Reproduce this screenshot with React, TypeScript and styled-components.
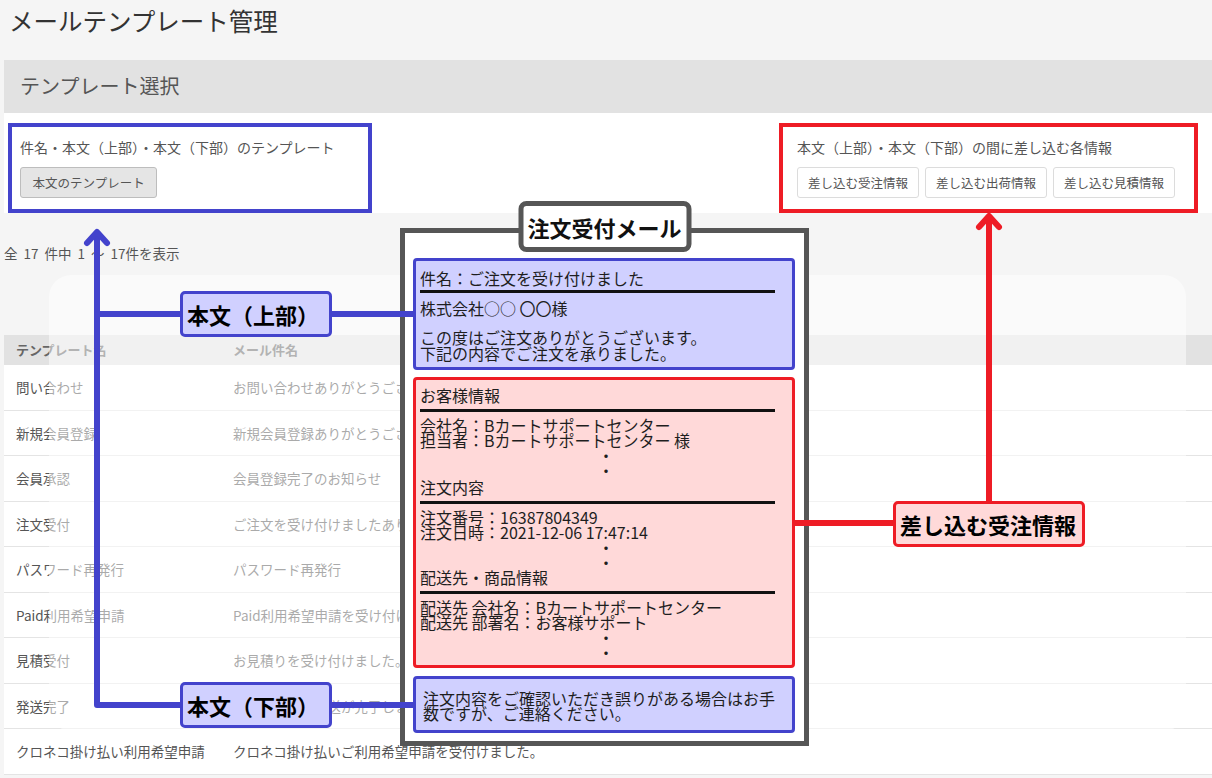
import React from 'react';
import styled, { createGlobalStyle, css } from 'styled-components';

const BLUE = '#4343cc';
const RED = '#ee1c25';
const LAVENDER = '#d0d0ff';
const PINK = '#ffd9d9';
const FRAME = '#565656';

const GlobalStyle = createGlobalStyle`
  html, body {
    margin: 0;
    padding: 0;
    overflow: hidden;
  }
  body {
    background: #f5f5f5;
    color: #555;
    font-family: "Noto Sans CJK JP", "Noto Sans", sans-serif;
  }
`;

type Tone = 'blue' | 'red';

const rows = [
  { name: '問い合わせ', subject: 'お問い合わせありがとうございます' },
  { name: '新規会員登録', subject: '新規会員登録ありがとうございます' },
  { name: '会員承認', subject: '会員登録完了のお知らせ' },
  { name: '注文受付', subject: 'ご注文を受け付けましたありがとうございました' },
  { name: 'パスワード再発行', subject: 'パスワード再発行' },
  { name: 'Paid利用希望申請', subject: 'Paid利用希望申請を受け付けました' },
  { name: '見積受付', subject: 'お見積りを受け付けました。ありがとうございます' },
  { name: '発送完了', subject: 'ご注文商品の発送が完了しました' },
  { name: 'クロネコ掛け払い利用希望申請', subject: 'クロネコ掛け払いご利用希望申請を受付けました。' },
];

export default function App() {
  return (
    <>
      <GlobalStyle />
      <Page>
        <PageTitle>メールテンプレート管理</PageTitle>
        <SectionBar>テンプレート選択</SectionBar>
        <SelectPanel>
          <Group>
            <GroupLabel>件名・本文（上部）・本文（下部）のテンプレート</GroupLabel>
            <ButtonRow>
              <Btn $gray>本文のテンプレート</Btn>
            </ButtonRow>
          </Group>
          <Group>
            <GroupLabel>本文（上部）・本文（下部）の間に差し込む各情報</GroupLabel>
            <ButtonRow>
              <Btn>差し込む受注情報</Btn>
              <Btn>差し込む出荷情報</Btn>
              <Btn>差し込む見積情報</Btn>
            </ButtonRow>
          </Group>
        </SelectPanel>

        <Count>全 17 件中 1 ～ 17件を表示</Count>

        <Table>
          <HeadRow>
            <HeadCell>テンプレート名</HeadCell>
            <HeadCell>メール件名</HeadCell>
          </HeadRow>
          {rows.map((r) => (
            <Row key={r.name}>
              <Cell>{r.name}</Cell>
              <Cell>{r.subject}</Cell>
            </Row>
          ))}
        </Table>

        <Fade />

        {/* annotation layer */}
        <Outline $tone="blue" $x={8} $y={123} $w={364} $h={90} />
        <Outline $tone="red" $x={779} $y={123} $w={419} $h={90} />

        <MailPanel>
          <PanelTab>注文受付メール</PanelTab>
          <SubjectBlock>
            <Line>件名：ご注文を受け付けました</Line>
            <Rule $tight />
            <Line>株式会社○○ 〇〇様</Line>
            <Line $gap={13}>この度はご注文ありがとうございます。</Line>
            <Line>下記の内容でご注文を承りました。</Line>
          </SubjectBlock>
          <InsertBlock>
            <Line>お客様情報</Line>
            <Rule />
            <Line>会社名：Bカートサポートセンター</Line>
            <Line>担当者：Bカートサポートセンター 様</Line>
            <Dot>・</Dot>
            <Dot>・</Dot>
            <Line $gap={2}>注文内容</Line>
            <Rule />
            <Line>注文番号：16387804349</Line>
            <Line>注文日時：2021-12-06 17:47:14</Line>
            <Dot>・</Dot>
            <Dot>・</Dot>
            <Line>配送先・商品情報</Line>
            <Rule />
            <Line>配送先 会社名：Bカートサポートセンター</Line>
            <Line>配送先 部署名：お客様サポート</Line>
            <Dot>・</Dot>
            <Dot>・</Dot>
          </InsertBlock>
          <FooterBlock>
            <Line>注文内容をご確認いただき誤りがある場合はお手</Line>
            <Line>数ですが、ご連絡ください。</Line>
          </FooterBlock>
        </MailPanel>

        <Connectors viewBox="0 0 1212 778" width={1212} height={778}>
          <g fill="none" stroke={BLUE} strokeWidth={6} strokeLinejoin="round">
            <path d="M97 236 V705 H180" />
            <path d="M97 314 H180" />
            <path d="M332 314 H413" />
            <path d="M332 705 H413" />
            <path d="M87 243 L97 232 L107 243" strokeLinecap="round" />
          </g>
          <g fill="none" stroke={RED} strokeWidth={6} strokeLinejoin="round">
            <path d="M989 220 V501" />
            <path d="M795 523 H893" />
            <path d="M979 227 L989 216 L999 227" strokeLinecap="round" />
          </g>
        </Connectors>

        <Callout $tone="blue" $x={180} $y={291} $w={152}>本文（上部）</Callout>
        <Callout $tone="blue" $x={180} $y={682} $w={152}>本文（下部）</Callout>
        <Callout $tone="red" $x={893} $y={501} $w={192}>差し込む受注情報</Callout>
      </Page>
    </>
  );
}

const Page = styled.div`
  position: relative;
  width: 1212px;
  height: 778px;
  overflow: hidden;
  padding-left: 4px;
  box-sizing: border-box;
`;

const PageTitle = styled.h1`
  margin: 0 0 0 5px;
  height: 60px;
  padding-top: 6px;
  box-sizing: border-box;
  font-size: 24.5px;
  line-height: 30px;
  font-weight: 400;
  color: #333;
`;

const SectionBar = styled.div`
  display: flex;
  align-items: center;
  height: 53px;
  padding: 0 16px 3px;
  box-sizing: border-box;
  background: #e2e2e2;
  font-size: 20px;
  color: #555;
`;

const SelectPanel = styled.div`
  display: flex;
  justify-content: space-between;
  height: 100px;
  padding: 24px 37px 0 16px;
  box-sizing: border-box;
  background: #fff;
`;

const Group = styled.div`
  display: flex;
  flex-direction: column;
  gap: 10px;
`;

const GroupLabel = styled.div`
  font-size: 14px;
  line-height: 20px;
  color: #555;
  white-space: nowrap;
`;

const ButtonRow = styled.div`
  display: flex;
  gap: 6px;
`;

const Btn = styled.button<{ $gray?: boolean }>`
  height: 31px;
  padding: 0 10px;
  border-radius: 3px;
  border: 1px solid #dcdcdc;
  background: #fff;
  color: #555;
  font-family: inherit;
  font-size: 12.5px;
  white-space: nowrap;
  ${(p) =>
    p.$gray &&
    css`
      padding: 0 11.5px;
      background: #e5e5e5;
      border-color: #bdbdbd;
    `}
`;

const Count = styled.div`
  margin-top: 30px;
  font-size: 13.5px;
  line-height: 20px;
  word-spacing: 3px;
  color: #555;
`;

const Table = styled.div`
  margin-top: 72px;
`;

const HeadRow = styled.div`
  display: grid;
  grid-template-columns: 217px 1fr;
  height: 30px;
  background: #e2e2e2;
`;

const HeadCell = styled.div`
  padding-left: 12px;
  font-size: 13px;
  line-height: 30px;
  font-weight: 700;
  color: #666;
`;

const Row = styled.div`
  display: grid;
  grid-template-columns: 217px 1fr;
  height: 45.5px;
  box-sizing: border-box;
  border-bottom: 1px solid #e4e4e4;
  background: #fff;
`;

const Cell = styled.div`
  display: flex;
  align-items: center;
  padding-left: 12px;
  font-size: 13.5px;
  color: #555;
  white-space: nowrap;
  overflow: hidden;
`;

const Fade = styled.div`
  position: absolute;
  left: 49px;
  top: 275px;
  width: 1137px;
  height: 456px;
  border-radius: 22px;
  background: rgba(255, 255, 255, 0.5);
`;

const Outline = styled.div<{ $tone: Tone; $x: number; $y: number; $w: number; $h: number }>`
  position: absolute;
  left: ${(p) => p.$x}px;
  top: ${(p) => p.$y}px;
  width: ${(p) => p.$w}px;
  height: ${(p) => p.$h}px;
  box-sizing: border-box;
  border: 4px solid ${(p) => (p.$tone === 'blue' ? BLUE : RED)};
`;

const Connectors = styled.svg`
  position: absolute;
  left: 0;
  top: 0;
  pointer-events: none;
`;

const Callout = styled.div<{ $tone: Tone; $x: number; $y: number; $w: number }>`
  position: absolute;
  left: ${(p) => p.$x}px;
  top: ${(p) => p.$y}px;
  width: ${(p) => p.$w}px;
  height: 46px;
  box-sizing: border-box;
  display: flex;
  align-items: center;
  padding-left: 4px;
  border: 3px solid ${(p) => (p.$tone === 'blue' ? BLUE : RED)};
  border-radius: 5px;
  background: ${(p) => (p.$tone === 'blue' ? LAVENDER : PINK)};
  color: #000;
  font-size: 22px;
  font-weight: 700;
  white-space: nowrap;
`;

const MailPanel = styled.div`
  position: absolute;
  left: 400px;
  top: 228px;
  width: 409px;
  box-sizing: border-box;
  display: flex;
  flex-direction: column;
  gap: 7px;
  padding: 25px 9px 8px 8px;
  border: 5px solid ${FRAME};
  background: #fff;
`;

const PanelTab = styled.div`
  position: absolute;
  top: -32px;
  left: 50%;
  transform: translateX(-50%);
  width: 173px;
  height: 51px;
  box-sizing: border-box;
  display: flex;
  align-items: center;
  justify-content: center;
  border: 5px solid ${FRAME};
  border-radius: 8px;
  background: #fff;
  color: #111;
  font-size: 22px;
  font-weight: 700;
  white-space: nowrap;
`;

const MailBlock = styled.div<{ $tone?: Tone }>`
  display: flex;
  flex-direction: column;
  border: 3px solid ${(p) => (p.$tone === 'red' ? RED : BLUE)};
  border-radius: 4px;
  background: ${(p) => (p.$tone === 'red' ? PINK : LAVENDER)};
  color: #1e1e1e;
  font-size: 16px;
  line-height: 15px;
`;

const SubjectBlock = styled(MailBlock)`
  padding: 9px 0 6px 4px;
  line-height: 16px;
`;

const InsertBlock = styled(MailBlock).attrs({ $tone: 'red' as Tone })`
  padding: 7.5px 0 5.5px 4px;
`;

const FooterBlock = styled(MailBlock)`
  margin-top: 1px;
  padding: 11.5px 0 9.5px 7px;
`;

const Line = styled.div<{ $gap?: number }>`
  white-space: nowrap;
  margin-top: ${(p) => p.$gap ?? 0}px;
`;

const Dot = styled.div`
  text-align: center;
`;

const Rule = styled.div<{ $tight?: boolean }>`
  height: 3px;
  background: #111;
  margin: ${(p) => (p.$tight ? '4px 17px 7px 0' : '6px 17px 6px 0')};
`;
